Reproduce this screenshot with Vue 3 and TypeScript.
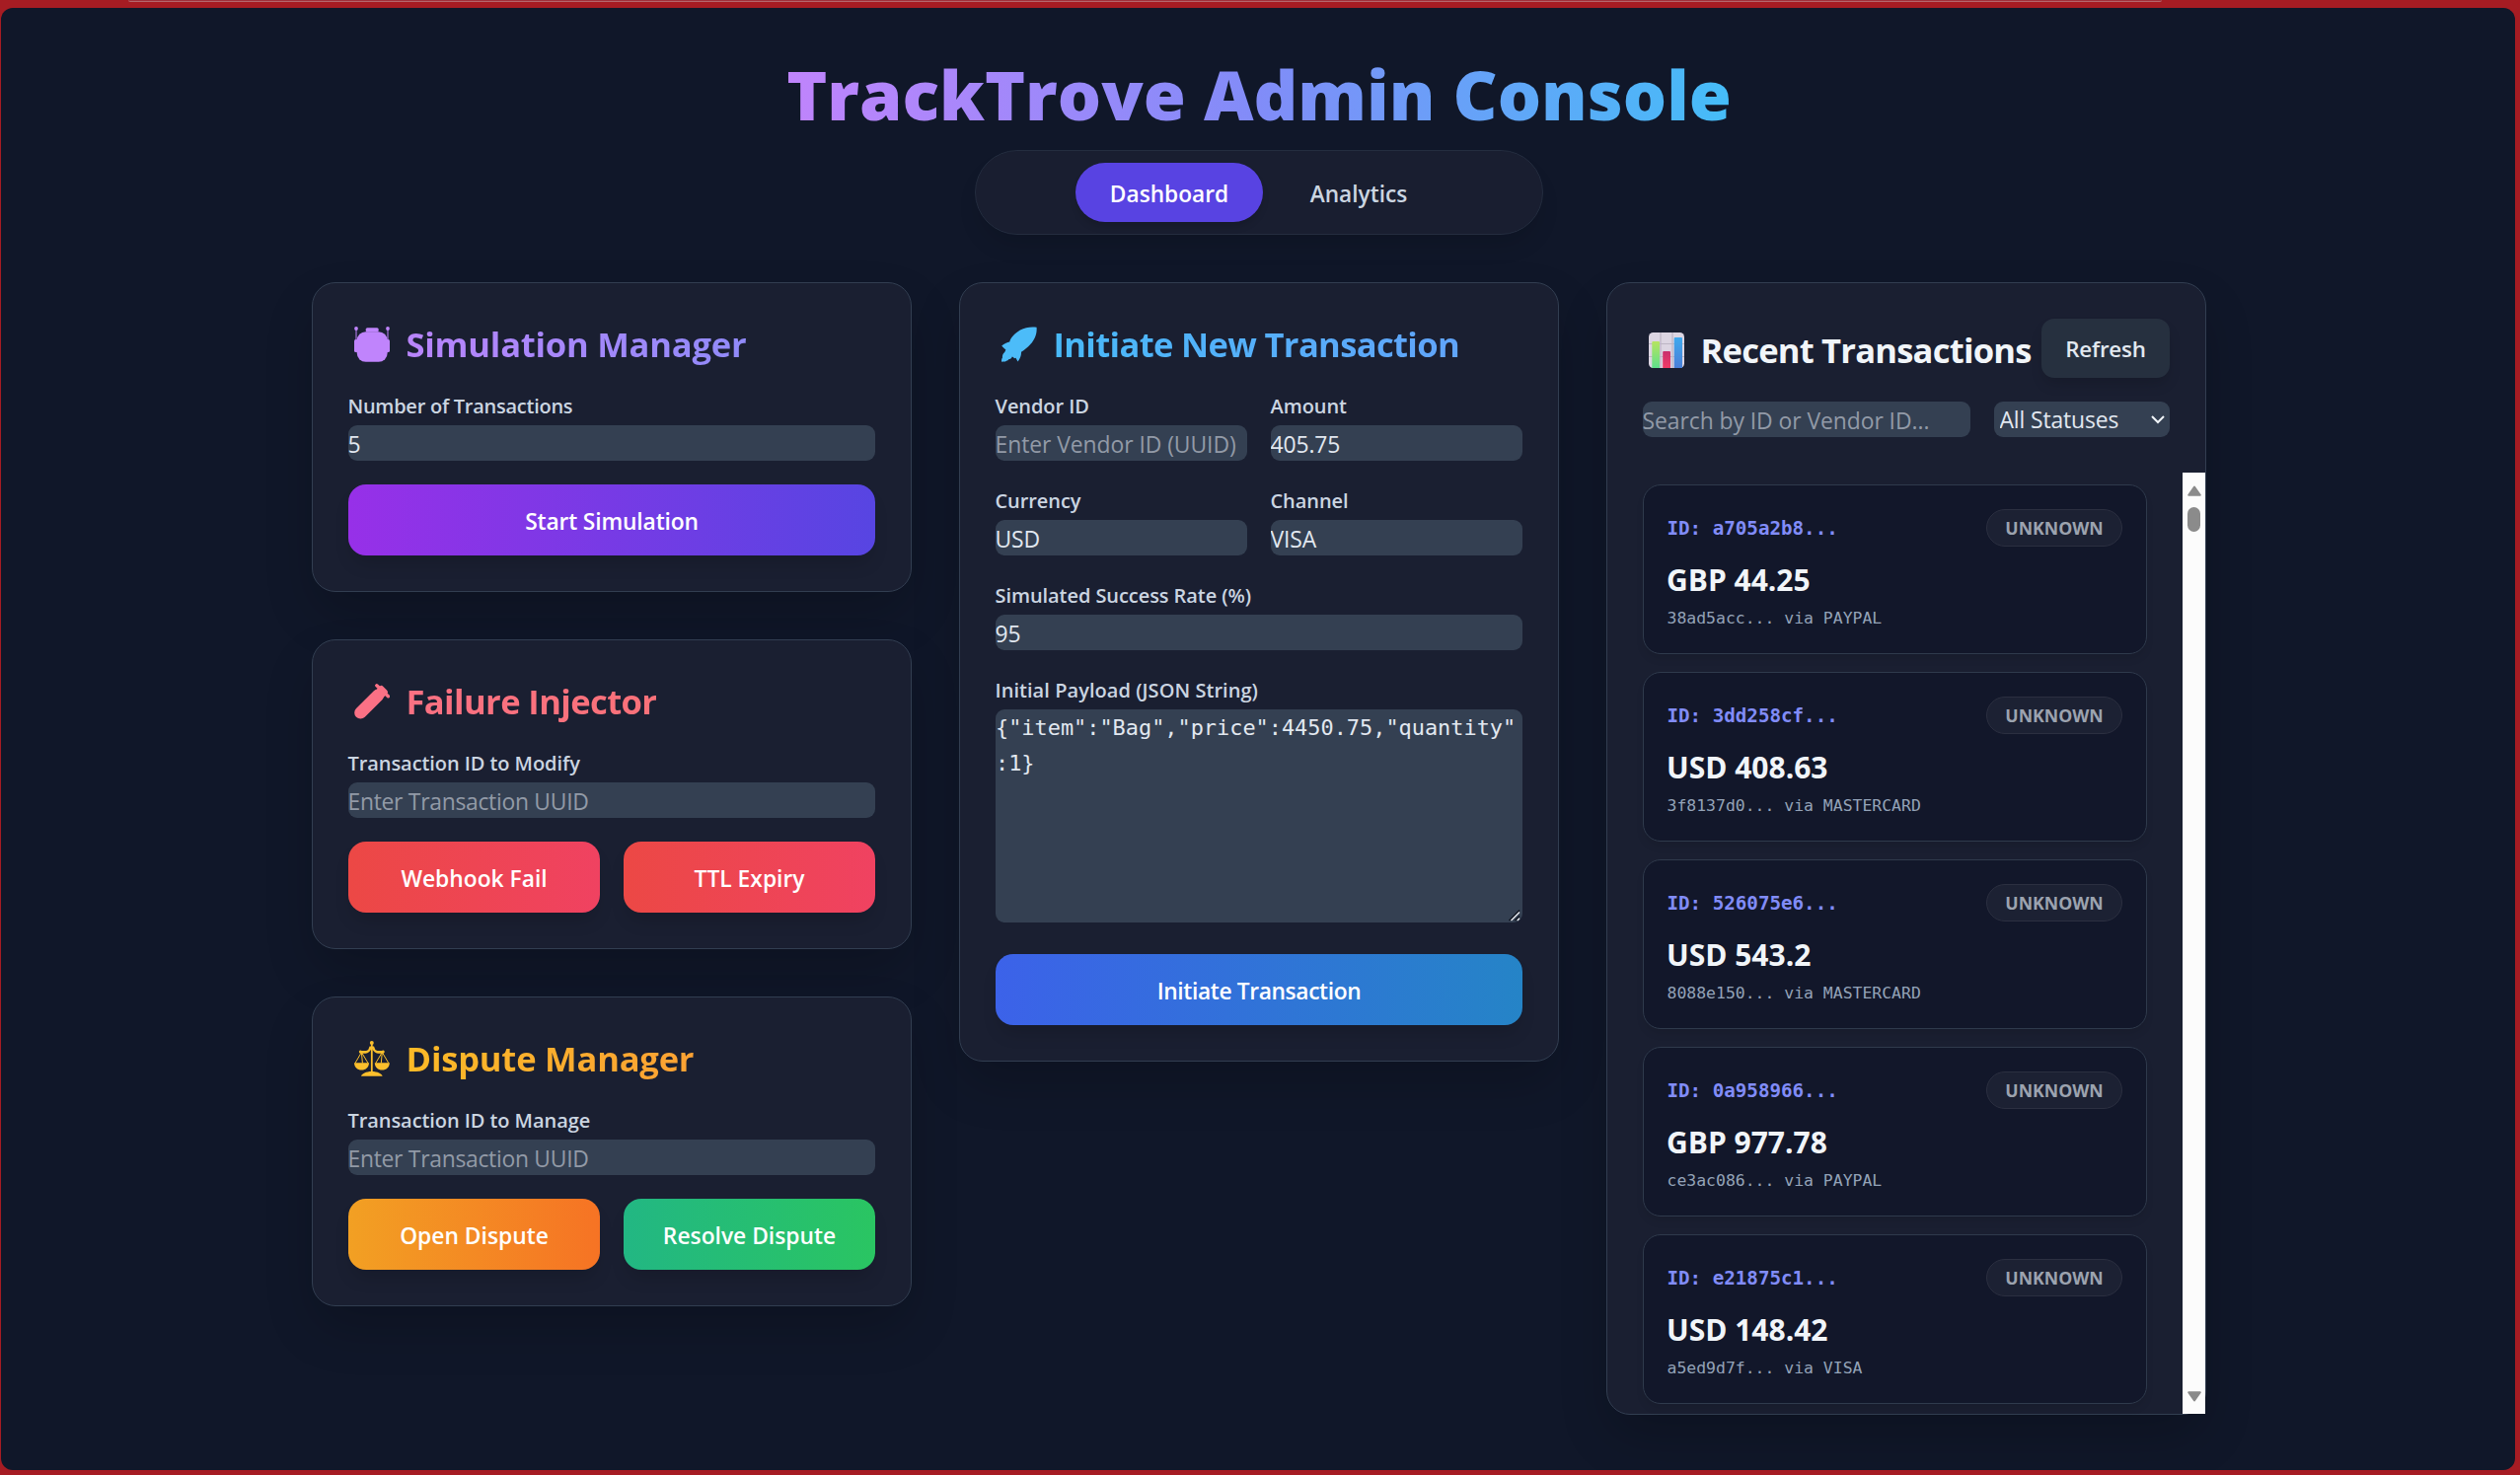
<script setup lang="ts">
import { ref } from 'vue'

interface Transaction {
  id: string
  amount: string
  detail: string
  status: string
}

const tabs = ['Dashboard', 'Analytics']
const activeTab = ref('Dashboard')

const count = ref('5')
const failureId = ref('')
const disputeId = ref('')
const vendorId = ref('')
const amount = ref('405.75')
const currency = ref('USD')
const channel = ref('VISA')
const successRate = ref('95')
const payload = ref('{"item":"Bag","price":4450.75,"quantity":1}')
const search = ref('')
const status = ref('All Statuses')

const transactions: Transaction[] = [
  { id: 'a705a2b8', amount: 'GBP 44.25', detail: '38ad5acc... via PAYPAL', status: 'UNKNOWN' },
  { id: '3dd258cf', amount: 'USD 408.63', detail: '3f8137d0... via MASTERCARD', status: 'UNKNOWN' },
  { id: '526075e6', amount: 'USD 543.2', detail: '8088e150... via MASTERCARD', status: 'UNKNOWN' },
  { id: '0a958966', amount: 'GBP 977.78', detail: 'ce3ac086... via PAYPAL', status: 'UNKNOWN' },
  { id: 'e21875c1', amount: 'USD 148.42', detail: 'a5ed9d7f... via VISA', status: 'UNKNOWN' },
]
</script>

<template>
  <div class="window">
    <div class="window-tab"></div>
    <main class="page">
      <div class="container">
        <h1><span>TrackTrove Admin Console</span></h1>

        <nav class="tabs">
          <button
            v-for="tab in tabs"
            :key="tab"
            class="tab"
            :class="{ active: tab === activeTab }"
            @click="activeTab = tab"
          >{{ tab }}</button>
        </nav>

        <div class="columns">
          <div class="stack">
            <section class="card">
              <h2 class="purple">
                <svg class="icon" viewBox="0 0 36 36" fill="#c084fc">
                  <rect x="2.7" y="5.2" width="31" height="30.6" rx="9" />
                  <rect x="11.7" y="1.2" width="13" height="4.4" rx="1.6" />
                  <rect x="0" y="13" width="4" height="13" rx="1.6" />
                  <rect x="32" y="13" width="4" height="13" rx="1.6" />
                  <circle cx="2" cy="2" r="1.9" />
                  <circle cx="34" cy="2" r="1.9" />
                  <path d="M1.5 2h1v12h-1zM33.5 2h1v12h-1z" />
                </svg>
                <span>Simulation Manager</span>
              </h2>
              <label class="snug">Number of Transactions</label>
              <input v-model="count" type="text" />
              <button class="action violet">Start Simulation</button>
            </section>

            <section class="card">
              <h2 class="rose">
                <svg class="icon" viewBox="0 0 36 36" fill="none" stroke="#fb7185" stroke-linecap="round">
                  <path d="M6.4 29.4 24 11.8" stroke-width="12.4" />
                  <path d="M22 10 27.5 4.5 31.5 8.5 26 14z" stroke-width="5" fill="#fb7185" stroke-linejoin="round" />
                  <path d="M22.8 1.8 34.4 12.8" stroke-width="3.4" />
                </svg>
                <span>Failure Injector</span>
              </h2>
              <label>Transaction ID to Modify</label>
              <input v-model="failureId" class="snug" type="text" placeholder="Enter Transaction UUID" />
              <div class="pair">
                <button class="action red">Webhook Fail</button>
                <button class="action red">TTL Expiry</button>
              </div>
            </section>

            <section class="card">
              <h2 class="amber">
                <svg class="icon" viewBox="0 0 36 36" fill="#fbbf2c">
                  <circle cx="17.8" cy="2" r="2" />
                  <path d="M16.9 3h1.8v28h-1.8z" />
                  <path d="M15.6 5.5h4.4l1.4 3.4c1.6 1.4 4.4 1.2 6.6 1.1a1.6 1.6 0 1 1 .6 2.6c-3.2.6-7.2.4-9.2-2.6-.7-1-1-2-1.6-2s-.9 1-1.6 2c-2 3-6 3.2-9.2 2.6a1.6 1.6 0 1 1 .6-2.6c2.2.1 5 .3 6.6-1.1z" />
                  <path d="M0 22.2h15c0 4.2-3.3 7.4-7.5 7.4S0 26.4 0 22.2zM20.8 22.2h15c0 4.2-3.3 7.4-7.5 7.4s-7.5-3.2-7.5-7.4z" />
                  <path d="M7.4 11.5 1 22.5M7.4 11.5 14 22.5M28.3 11.5 21.8 22.5M28.3 11.5 34.8 22.5M7.4 11.5 8.4 22.5M28.3 11.5 27.3 22.5" fill="none" stroke="#fbbf2c" stroke-width="1" />
                  <path d="M7 35.8c.6-2.6 5-4.8 10.8-4.8s10.2 2.2 10.8 4.8z" />
                </svg>
                <span>Dispute Manager</span>
              </h2>
              <label>Transaction ID to Manage</label>
              <input v-model="disputeId" class="snug" type="text" placeholder="Enter Transaction UUID" />
              <div class="pair">
                <button class="action orange">Open Dispute</button>
                <button class="action green">Resolve Dispute</button>
              </div>
            </section>
          </div>

          <section class="card">
            <h2 class="sky">
              <svg class="icon" viewBox="0 0 36 36" fill="#4cbcf9">
                <path d="M35.6.8C36.2 8 33.2 13.6 29.5 17.8c-3 3.4-6.5 6-9.5 8 .2 3.2-1 6.8-3.4 9.6-.8-1.4-1.6-2.2-2-3.600l-1.600.4c-.8-1-1.400-1.600-2.200-1.800-.6 1.800-2 2.800-3.600 2.800-.8 1.600-2.400 1.200-3.400 2.400-1.200-.4-2.400.2-3.800 0 0-2 .2-3.200 1-4.200-.4-2.600.8-4.200 2.200-5.400l1.200-2.400c-1.600-1.200-2.800-3-4.200-4.200C2.600 17.400 5.400 15.800 8.200 15.400 9.800 10.600 14 6.600 19 3.600 24 .8 30 .1 35.600.8z" />
              </svg>
              <span>Initiate New Transaction</span>
            </h2>
            <div class="form">
              <div class="fields">
                <div>
                  <label>Vendor ID</label>
                  <input v-model="vendorId" class="wide" type="text" placeholder="Enter Vendor ID (UUID)" />
                </div>
                <div>
                  <label>Amount</label>
                  <input v-model="amount" type="text" />
                </div>
                <div>
                  <label>Currency</label>
                  <input v-model="currency" type="text" />
                </div>
                <div>
                  <label>Channel</label>
                  <input v-model="channel" type="text" />
                </div>
              </div>
              <div>
                <label>Simulated Success Rate (%)</label>
                <input v-model="successRate" type="text" />
              </div>
              <div class="payload">
                <label>Initial Payload (JSON String)</label>
                <textarea v-model="payload" spellcheck="false"></textarea>
                <svg class="grip" viewBox="0 0 12 12" fill="none">
                  <path d="M.5 11 11 .5M6.5 11 11 6.5" stroke="#10141f" stroke-width="1.4" />
                  <path d="M2.5 11 11 2.5M8.8 11 11 8.8" stroke="#e8eaee" stroke-width="1.4" />
                </svg>
              </div>
            </div>
            <button class="action blue">Initiate Transaction</button>
          </section>

          <section class="card recent">
            <div class="recent-head">
              <h2 class="plain">
                <svg class="icon" viewBox="0 0 36 36">
                  <defs>
                    <linearGradient id="bar-green" x1="0" y1="0" x2="0" y2="1">
                      <stop offset="0" stop-color="#b6e45f" />
                      <stop offset="1" stop-color="#5fe08c" />
                    </linearGradient>
                    <linearGradient id="bar-pink" x1="0" y1="0" x2="0" y2="1">
                      <stop offset="0" stop-color="#c92f6e" />
                      <stop offset="1" stop-color="#f03a66" />
                    </linearGradient>
                    <linearGradient id="bar-blue" x1="0" y1="0" x2="0" y2="1">
                      <stop offset="0" stop-color="#3fa9ee" />
                      <stop offset="1" stop-color="#4a7fd8" />
                    </linearGradient>
                  </defs>
                  <rect width="36" height="36" rx="4.5" fill="#dcd5e2" />
                  <path d="M0 11.5h36M0 24.5h36M12 0v36M24 0v36" stroke="#bdb5c4" stroke-width="1.2" />
                  <path d="M3.3 10a1 1 0 0 1 1-1h5.7a1 1 0 0 1 1 1v26H3.3z" fill="url(#bar-green)" />
                  <path d="M14.2 20a1 1 0 0 1 1-1h5.8a1 1 0 0 1 1 1v16h-7.8z" fill="url(#bar-pink)" />
                  <path d="M25.7 6a1 1 0 0 1 1-1h6.3a1 1 0 0 1 1 1v30h-8.3z" fill="url(#bar-blue)" />
                </svg>
                <span>Recent Transactions</span>
              </h2>
              <button class="refresh">Refresh</button>
            </div>
            <div class="filters">
              <input v-model="search" class="wide" type="text" placeholder="Search by ID or Vendor ID..." />
              <div class="select">
                <select v-model="status">
                  <option>All Statuses</option>
                </select>
                <svg class="chevron" viewBox="0 0 14 9" fill="none" stroke="#f1f5f9" stroke-width="2">
                  <path d="M1 1l6 6 6-6" />
                </svg>
              </div>
            </div>
            <div class="scroller">
              <div class="list">
                <article v-for="tx in transactions" :key="tx.id" class="tx">
                  <div class="tx-head">
                    <span class="tx-id">ID: {{ tx.id }}...</span>
                    <span class="badge">{{ tx.status }}</span>
                  </div>
                  <div class="tx-amount">{{ tx.amount }}</div>
                  <div class="tx-detail">{{ tx.detail }}</div>
                </article>
              </div>
              <div class="scrollbar">
                <svg viewBox="0 0 14 11" fill="#8b8b8b" stroke="#8b8b8b" stroke-width="2" stroke-linejoin="round"><path d="M7 1.5 12.8 9.8H1.2z" /></svg>
                <div class="thumb"></div>
                <svg class="down" viewBox="0 0 14 11" fill="#8b8b8b" stroke="#8b8b8b" stroke-width="2" stroke-linejoin="round"><path d="M7 9.5 12.8 1.2H1.2z" /></svg>
              </div>
            </div>
          </section>
        </div>
      </div>
    </main>
  </div>
</template>

<style>
html,
body {
  margin: 0;
  overflow: hidden;
  background: #a61c23;
}
</style>

<style scoped>
* {
  box-sizing: border-box;
}

.window {
  position: relative;
  width: 2554px;
  height: 1495px;
  padding: 8px 5px 5px 1px;
  background: #a61c23;
  font-family: 'Open Sans', 'Noto Sans', sans-serif;
  color: #e2e8f0;
}

.window-tab {
  position: absolute;
  top: 0;
  left: 130px;
  width: 2061px;
  height: 2px;
  background: #a0303a;
  border-bottom: 1px solid #b5676c;
  border-radius: 0 0 8px 8px;
}

.page {
  height: 100%;
  padding: 48px 0 0 2px;
  background: #101729;
  border-radius: 12px;
  overflow: hidden;
}

.container {
  width: 1920px;
  margin: 0 auto;
}

h1,
h2 {
  margin: 0;
}

h1 {
  display: flex;
  justify-content: center;
  height: 72px;
  margin-bottom: 24px;
  font-size: 69.7px;
  font-weight: 800;
  line-height: 79px;
  white-space: nowrap;
}

h1 span {
  height: 90px;
  background: linear-gradient(to right, #c084fc, #818cf8 50%, #45bdf8);
  background-clip: text;
  -webkit-background-clip: text;
  color: transparent;
}

.tabs {
  display: flex;
  align-items: center;
  justify-content: center;
  gap: 12px;
  width: 576px;
  height: 86px;
  margin: 0 auto 48px;
  background: #191e30;
  border: 1px solid #242d3f;
  border-radius: 43px;
  box-shadow: 0 15px 22px -4px rgba(0, 0, 0, 0.12);
}

button {
  font-family: inherit;
  border: 0;
  padding: 0;
  white-space: nowrap;
}

.tab {
  width: 170px;
  height: 60px;
  padding-top: 2px;
  border-radius: 30px;
  background: transparent;
  color: #cbd5e1;
  font-size: 22.7px;
  font-weight: 600;
}

.tab.active {
  width: 190px;
  background: #5843e2;
  color: #ffffff;
  box-shadow: 0 6px 9px -2px rgba(0, 0, 0, 0.16);
}

.columns {
  display: grid;
  grid-template-columns: repeat(3, 608px);
  gap: 48px;
  align-items: start;
}

.stack {
  display: grid;
  gap: 48px;
}

.card {
  padding: 36px;
  background: #1a1f31;
  border: 1px solid #323e51;
  border-radius: 24px;
  box-shadow: 0 24px 52px -4px rgba(0, 0, 0, 0.2);
}

h2 {
  display: flex;
  align-items: center;
  height: 48px;
  margin-bottom: 24px;
  font-size: 34.6px;
  font-weight: 700;
  line-height: 48px;
  white-space: nowrap;
}

h2 span {
  padding-top: 3px;
  background-image: var(--tint);
  background-clip: text;
  -webkit-background-clip: text;
  background-size: 534px 100%;
  background-position: -60px 0;
  color: transparent;
}

.purple {
  --tint: linear-gradient(to right, #c084fc, #818cf8);
  letter-spacing: -0.24px;
}

.rose {
  --tint: linear-gradient(to right, #fb7185, #f87171);
  letter-spacing: -0.62px;
}

.amber {
  --tint: linear-gradient(to right, #fbbf24, #fb923c);
  letter-spacing: -0.22px;
}

.sky {
  --tint: linear-gradient(to right, #45bdf9, #60a5fa 85%);
  letter-spacing: -0.67px;
}

.plain {
  margin: 0;
  letter-spacing: -0.8px;
}

.plain span {
  background: none;
  color: #f1f5f9;
}

.icon {
  flex: none;
  width: 36px;
  height: 36px;
  margin: 4px 16.5px 0 6px;
}

label {
  display: block;
  height: 30px;
  margin: 0 0 6px -0.5px;
  padding-top: 2px;
  font-size: 20px;
  font-weight: 600;
  letter-spacing: -0.07px;
  line-height: 30px;
  color: #cbd5e1;
  white-space: nowrap;
}

label.snug {
  letter-spacing: -0.26px;
}

input,
select {
  display: block;
  width: 100%;
  height: 36px;
  margin: 0;
  padding: 2px 0 0;
  border: 0;
  border-radius: 9px;
  background: #344052;
  color: #e2e8f0;
  font-family: inherit;
  font-size: 22.9px;
  letter-spacing: -0.12px;
  line-height: 34px;
  text-indent: -0.5px;
  outline: none;
}

input.snug {
  letter-spacing: -0.29px;
}

input.wide {
  letter-spacing: -0.06px;
}

input::placeholder {
  color: #929aa7;
  opacity: 1;
}

.action {
  display: block;
  width: 100%;
  height: 72px;
  margin-top: 24px;
  padding-top: 2px;
  border-radius: 18px;
  color: #ffffff;
  font-size: 22.8px;
  font-weight: 600;
  box-shadow: 0 12px 18px -4px rgba(0, 0, 0, 0.14);
}

.pair {
  display: grid;
  grid-template-columns: 1fr 1fr;
  gap: 24px;
}

.violet {
  background: linear-gradient(to right, #9730e8, #5745e2);
  letter-spacing: -0.15px;
}

.red { background: linear-gradient(to right, #ec4845, #f04261); }
.orange { background: linear-gradient(to right, #f2a023, #f67324); }
.green { background: linear-gradient(to right, #22b783, #2ac562); }

.blue {
  background: linear-gradient(to right, #3c62e9, #2584c7);
  letter-spacing: -0.38px;
}

.form,
.fields {
  display: grid;
  gap: 24px;
}

.fields {
  grid-template-columns: 1fr 1fr;
}

.payload {
  position: relative;
  margin-bottom: 8px;
}

.payload label {
  letter-spacing: 0.05px;
}

textarea {
  display: block;
  width: 100%;
  height: 216px;
  padding: 1px 0 0;
  border: 0;
  border-radius: 9px;
  background: #344052;
  color: #e2e8f0;
  font-family: 'DejaVu Sans Mono', monospace;
  font-size: 21.9px;
  line-height: 36px;
  line-break: anywhere;
  overflow: hidden;
  resize: none;
  outline: none;
}

.grip {
  position: absolute;
  right: 2px;
  bottom: 1px;
  width: 12px;
  height: 12px;
}

.recent {
  height: 1148px;
  padding: 36px 0 0;
}

.recent-head {
  display: flex;
  align-items: center;
  justify-content: space-between;
  height: 60px;
  padding: 0 36px;
}

.refresh {
  flex: none;
  width: 130px;
  height: 60px;
  padding-top: 1px;
  border-radius: 13px;
  background: #26303f;
  color: #e2e8f0;
  font-size: 22.4px;
  font-weight: 600;
  letter-spacing: -0.2px;
  box-shadow: 0 8px 14px -2px rgba(0, 0, 0, 0.14);
}

.filters {
  display: grid;
  grid-template-columns: 332px 178px;
  gap: 24px;
  margin-top: 24px;
  padding: 0 36px;
}

.select {
  position: relative;
}

select {
  appearance: none;
  padding-left: 6px;
}

.chevron {
  position: absolute;
  right: 5px;
  top: 14px;
  width: 14px;
  height: 9px;
}

.scroller {
  display: flex;
  justify-content: space-between;
  height: 954px;
  margin-top: 36px;
}

.list {
  display: grid;
  gap: 18px;
  align-content: start;
  width: 547px;
  padding: 12px 0 0 36px;
}

.tx {
  height: 172px;
  padding: 24px;
  background: #12172a;
  border: 1px solid #2f3a4c;
  border-radius: 18px;
  box-shadow: 0 6px 10px -2px rgba(0, 0, 0, 0.1);
}

.tx-head {
  display: flex;
  align-items: center;
  justify-content: space-between;
  height: 38px;
}

.tx-id {
  margin-left: -0.5px;
  padding-top: 2px;
  color: #818cf8;
  font-family: 'DejaVu Sans Mono', monospace;
  font-size: 19.2px;
  font-weight: 700;
  line-height: 30px;
  white-space: pre;
}

.badge {
  width: 138px;
  height: 38px;
  border: 1px solid #2b2f40;
  border-radius: 19px;
  background: #1c2133;
  color: #9ca3af;
  font-size: 17.7px;
  font-weight: 700;
  line-height: 37px;
  text-align: center;
}

.tx-amount {
  height: 42px;
  margin: 12px 0 0 -1px;
  color: #f1f5f9;
  font-size: 30px;
  font-weight: 700;
  line-height: 44px;
}

.tx-detail {
  height: 24px;
  margin: 6px 0 0 -0.5px;
  color: #94a3b8;
  font-family: 'DejaVu Sans Mono', monospace;
  font-size: 16.44px;
  line-height: 26px;
}

.scrollbar {
  display: flex;
  flex-direction: column;
  align-items: center;
  width: 23px;
  height: 954px;
  padding: 13px 0 12px;
  background: #fcfcfc;
}

.scrollbar svg {
  width: 14px;
  height: 11px;
}

.thumb {
  width: 13px;
  height: 25px;
  margin-top: 11px;
  border-radius: 7px;
  background: #8b8b8b;
}

.scrollbar .down {
  margin-top: auto;
}
</style>
